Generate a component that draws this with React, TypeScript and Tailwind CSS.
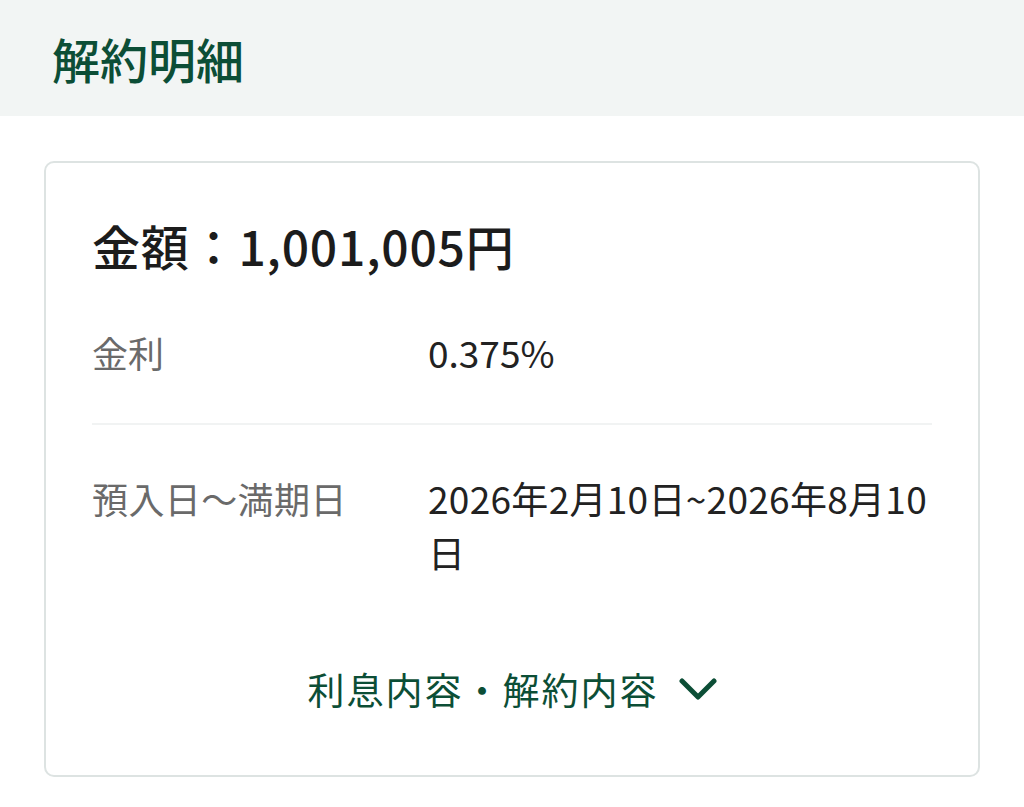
import React from "react";

const font = { fontFamily: '"Noto Sans CJK JP", "Noto Sans", sans-serif' };

export default function App() {
  return (
    <div className="w-[1024px] min-h-[807px] bg-white" style={font}>
      <header className="h-[116px] bg-[#f2f5f4] flex items-center pl-[52px]">
        <h1 className="text-[48px] leading-none font-medium text-[#0c4e36] tracking-[0px]">解約明細</h1>
      </header>
      <div className="px-[44px] pt-[45px]">
        <div className="border-2 border-[#dde3e2] rounded-[10px] px-[46px] pt-[46px] pb-[59px]">
          <div className="text-[48px] leading-[72px] font-medium text-[#1c1c1c] tracking-[0.8px]">金額：1,001,005円</div>
          <div className="mt-[44px] pb-[44px] border-b-2 border-[#f1f3f3] flex text-[36px] leading-[54px]">
            <div className="w-[336px] shrink-0 text-[#6a6a6a]">金利</div>
            <div className="text-[37px] text-[#222222]">0.375%</div>
          </div>
          <div className="pt-[46px] flex text-[36px] leading-[54px]">
            <div className="w-[336px] shrink-0 text-[#6a6a6a] tracking-[0.4px]">預入日～満期日</div>
            <div className="flex-1 text-[37px] text-[#222222] tracking-[0.3px] break-all">2026年2月10日~2026年8月10日</div>
          </div>
          <div className="mt-[83px] flex items-center justify-center gap-[20px] text-[37px] leading-[54px] text-[#0c4e36]">
            <span className="tracking-[2px]">利息内容・解約内容</span>
            <svg width="38" height="24" viewBox="0 0 38 24" fill="none">
              <path d="M3 4 L19 20 L35 4" stroke="#0c4e36" strokeWidth="5" strokeLinecap="round" strokeLinejoin="round" />
            </svg>
          </div>
        </div>
      </div>
    </div>
  );
}
